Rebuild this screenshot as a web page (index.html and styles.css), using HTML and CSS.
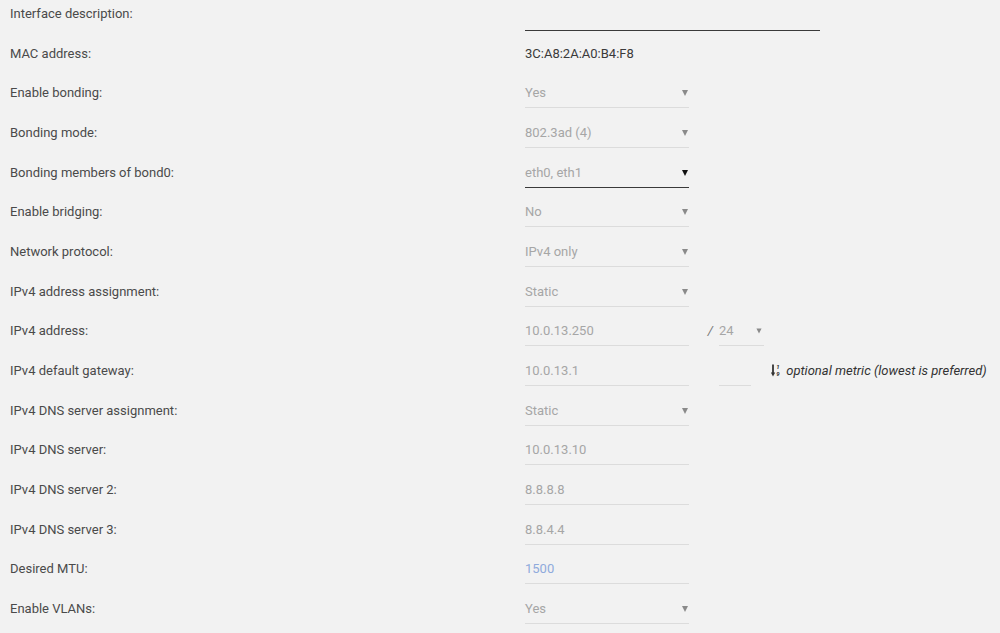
FILE: index.html
```html
<!DOCTYPE html>
<html lang="en">

<head>
	<meta charset="UTF-8">
	<title>Interface settings</title>
	<link rel="stylesheet" href="styles.css">
</head>

<body>
	<div class="settings">
		<div class="row">
			<div class="label">Interface description:</div>
			<div class="value"><div class="field wide focus"></div></div>
		</div>
		<div class="row">
			<div class="label">MAC address:</div>
			<div class="value"><span class="static">3C:A8:2A:A0:B4:F8</span></div>
		</div>
		<div class="row">
			<div class="label">Enable bonding:</div>
			<div class="value"><div class="field select">Yes<span class="arrow"></span></div></div>
		</div>
		<div class="row">
			<div class="label">Bonding mode:</div>
			<div class="value"><div class="field select">802.3ad (4)<span class="arrow"></span></div></div>
		</div>
		<div class="row">
			<div class="label">Bonding members of bond0:</div>
			<div class="value"><div class="field select focus">eth0, eth1<span class="arrow"></span></div></div>
		</div>
		<div class="row">
			<div class="label">Enable bridging:</div>
			<div class="value"><div class="field select">No<span class="arrow"></span></div></div>
		</div>
		<div class="row">
			<div class="label">Network protocol:</div>
			<div class="value"><div class="field select">IPv4 only<span class="arrow"></span></div></div>
		</div>
		<div class="row">
			<div class="label">IPv4 address assignment:</div>
			<div class="value"><div class="field select">Static<span class="arrow"></span></div></div>
		</div>
		<div class="row">
			<div class="label">IPv4 address:</div>
			<div class="value">
				<div class="field">10.0.13.250</div>
				<span class="slash">/</span>
				<div class="field select prefix">24<span class="arrow"></span></div>
			</div>
		</div>
		<div class="row">
			<div class="label">IPv4 default gateway:</div>
			<div class="value">
				<div class="field">10.0.13.1</div>
				<span class="slash"></span>
				<div class="field metric"></div>
				<span class="hint">
					<svg class="sort-icon" width="9" height="13" viewBox="0 0 9 13">
						<path d="M2 0.5V9.5" stroke="#333" stroke-width="1.8" fill="none"/>
						<path d="M-0.2 8.5L2 12.5L4.2 8.5Z" fill="#333"/>
						<text x="6.8" y="5.2" font-size="6" font-weight="bold" font-family="Roboto, sans-serif" text-anchor="middle" fill="#333">1</text>
						<text x="6.8" y="12" font-size="6" font-weight="bold" font-family="Roboto, sans-serif" text-anchor="middle" fill="#333">9</text>
					</svg>
					optional metric (lowest is preferred)
				</span>
			</div>
		</div>
		<div class="row">
			<div class="label">IPv4 DNS server assignment:</div>
			<div class="value"><div class="field select">Static<span class="arrow"></span></div></div>
		</div>
		<div class="row">
			<div class="label">IPv4 DNS server:</div>
			<div class="value"><div class="field">10.0.13.10</div></div>
		</div>
		<div class="row">
			<div class="label">IPv4 DNS server 2:</div>
			<div class="value"><div class="field">8.8.8.8</div></div>
		</div>
		<div class="row">
			<div class="label">IPv4 DNS server 3:</div>
			<div class="value"><div class="field">8.8.4.4</div></div>
		</div>
		<div class="row">
			<div class="label">Desired MTU:</div>
			<div class="value"><div class="field placeholder">1500</div></div>
		</div>
		<div class="row">
			<div class="label">Enable VLANs:</div>
			<div class="value"><div class="field select">Yes<span class="arrow"></span></div></div>
		</div>
	</div>
</body>

</html>
```

FILE: styles.css
```css
body {
	margin: 0;
	background-color: #f2f2f2;
	font-family: Roboto, "Noto Sans", sans-serif;
	font-size: 13px;
	color: #4a4a4a;
	overflow: hidden;
}

.settings {
	padding: 4px 0 0 10px;
}

.row {
	display: flex;
	height: 39.67px;
}

.label {
	width: 515px;
	line-height: 20px;
}

.value {
	display: flex;
	align-items: flex-start;
}

.static {
	line-height: 20px;
	color: #3a3a3a;
}

.field {
	position: relative;
	width: 164px;
	height: 20px;
	line-height: 20px;
	padding-bottom: 4px;
	border-bottom: 1px solid #dcdcdc;
	color: #a6a6a6;
}

.field.wide {
	width: 295px;
	padding-bottom: 6px;
}

.field.focus {
	border-bottom-color: #3a3a3a;
}

.field.placeholder {
	color: #8faadc;
}

.arrow {
	position: absolute;
	right: 1px;
	top: 7px;
	border-left: 3px solid transparent;
	border-right: 3px solid transparent;
	border-top: 6px solid #8a8a8a;
}

.focus .arrow {
	border-top-color: #111;
}

.slash {
	width: 30px;
	padding-right: 6px;
	box-sizing: border-box;
	text-align: right;
	line-height: 20px;
	font-style: italic;
	color: #777;
}

.field.prefix {
	width: 45px;
}

.field.prefix .arrow {
	right: 2px;
	transform: scale(0.85);
}

.field.metric {
	width: 32px;
}

.hint {
	margin-left: 20px;
	line-height: 20px;
	font-style: italic;
	color: #333;
	white-space: nowrap;
}

.sort-icon {
	vertical-align: -2px;
	margin-right: 3px;
}
```
